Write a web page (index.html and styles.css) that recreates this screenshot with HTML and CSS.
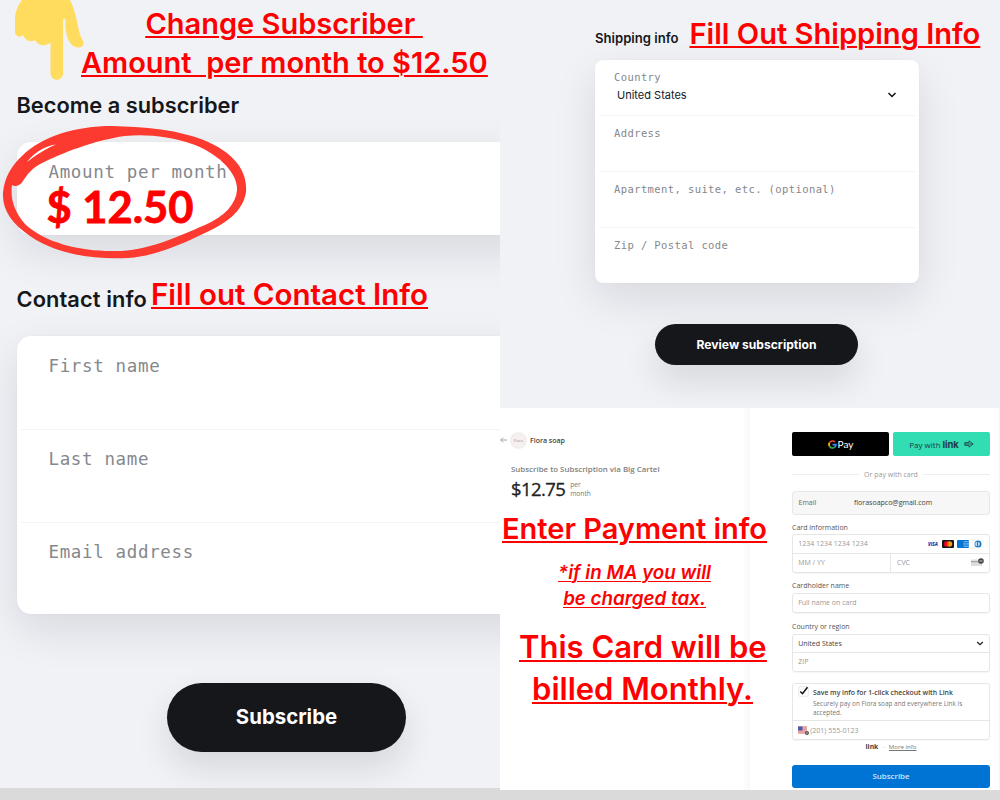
FILE: index.html
```html
<!DOCTYPE html>
<html lang="en">
<head>
    <meta charset="UTF-8">
    <meta name="viewport" content="width=device-width, initial-scale=1.0">
    <title>How to subscribe</title>
    <link rel="stylesheet" href="styles.css">
</head>
<body>
    <div class="board">
        <!-- Step 1: amount and contact details -->
        <section class="panel contact-panel">
            <h2 class="title amount-title"><span>Become a subscriber</span></h2>
            <div class="card amount-card">
                <div class="field">
                    <label>Amount per month</label>
                    <div class="amount">$ 12.50</div>
                </div>
            </div>
            <h2 class="title contact-title"><span>Contact info</span></h2>
            <div class="card contact-card">
                <div class="field"><label>First name</label></div>
                <div class="field"><label>Last name</label></div>
                <div class="field"><label>Email address</label></div>
            </div>
            <button class="pill">Subscribe</button>

            <svg class="hand" width="90" height="84" viewBox="0 0 90 84">
                <path fill="#ffdb5e" d="M22 0 C17 7 15 13 15 20 V31 C15 37 20 38 23 35 C25 40 30 43 35 40 C38 46 46 47 50.500 42.500 V73 C50.500 82 63 82 63 73 V20 C63 18.500 65.500 18.500 65.500 20 C65 31 67 39 71 44 C75 49 84 49 83.500 42 C79 34 78 26 76 17 C74 9 72 4 70 0 Z"/>
            </svg>
            <svg class="ring" width="252" height="140" viewBox="0 0 252 140">
                <path fill="#fc3a2f" fill-rule="evenodd" d="M3 73 C4 58 12 45 22 36 C42 16 76 6 112 6 C120 6 128 7 135 7 C170 9 205 16 227 33 C242 45 247 58 246 72 C243 92 225 104 205 113 C180 125 155 136 128 138 C95 140 55 134 30 116 C12 104 2 90 3 73 Z
                M12 65 C10 80 15 92 25 104 C45 123 80 131 112 131 C145 132 175 118 205 105 C225 96 236 84 237 70 C238 55 222 36 195 25 C170 16 145 14 125 16 C95 20 62 33 40 44 C30 50 27 55 23 61 C20 66 15 67 12 65 Z"/>
                <path fill="#fff" d="M27 42 C33 34 44 26 56 24.500 C47 28 36 35 27 42 Z"/>
            </svg>
            <div class="note note-amount"><span class="line-a">Change Subscriber&nbsp;</span><span class="line-b">Amount&nbsp; per month to $12.50</span></div>
            <div class="note note-contact">Fill out Contact Info</div>
        </section>

        <div class="right">
            <!-- Step 2: shipping -->
            <section class="panel shipping-panel">
                <h2 class="title shipping-title">Shipping info</h2>
                <div class="card shipping-card">
                    <div class="field">
                        <label>Country</label>
                        <div class="select">
                            <span>United States</span>
                            <svg width="10" height="6" viewBox="0 0 10 6"><path d="M1.500 1 L5 4.500 L8.500 1" fill="none" stroke="#111" stroke-width="1.500"/></svg>
                        </div>
                    </div>
                    <div class="field"><label>Address</label></div>
                    <div class="field"><label>Apartment, suite, etc. (optional)</label></div>
                    <div class="field"><label>Zip / Postal code</label></div>
                </div>
                <button class="pill">Review subscription</button>
                <div class="note note-shipping">Fill Out Shipping Info</div>
            </section>

            <!-- Step 3: payment -->
            <section class="payment-panel">
                <div class="summary">
                    <div class="merchant">
                        <svg width="8" height="8" viewBox="0 0 8 8"><path d="M7 4 H.7 M3.200 1.500 L.7 4 L3.200 6.500" fill="none" stroke="#999" stroke-width=".9"/></svg>
                        <span class="avatar">Fiora</span>
                        <span class="merchant-name">Fiora soap</span>
                    </div>
                    <div class="plan">Subscribe to Subscription via Big Cartel</div>
                    <div class="price">
                        <span class="price-value">$12.75</span>
                        <span class="price-period">per<br>month</span>
                    </div>
                </div>

                <form class="checkout">
                    <div class="wallets">
                        <div class="wallet gpay">
                            <svg width="9" height="9" viewBox="0 0 18 18">
                                <path fill="none" stroke="#ea4335" stroke-width="3.400" d="M3 5.500 A7 7 0 0 1 14 4"/>
                                <path fill="none" stroke="#fbbc04" stroke-width="3.400" d="M3 12.500 A7 7 0 0 1 3 5.500"/>
                                <path fill="none" stroke="#34a853" stroke-width="3.400" d="M13.500 14.400 A7 7 0 0 1 3 12.500"/>
                                <path fill="none" stroke="#4285f4" stroke-width="3.400" d="M9 9.200 H16 A7 7 0 0 1 13.500 14.400"/>
                            </svg>
                            <span>Pay</span>
                        </div>
                        <div class="wallet link-pay">
                            <span>Pay with</span><b>link</b>
                            <svg width="10" height="8" viewBox="0 0 10 8"><path d="M.8 2.600 H5 V.9 L9.200 4 L5 7.100 V5.400 H.8 Z M1 4 H8" fill="none" stroke="#1d3944" stroke-width=".8"/></svg>
                        </div>
                    </div>
                    <div class="divider"><span>Or pay with card</span></div>

                    <div class="email"><span class="email-label">Email</span><span>fiorasoapco@gmail.com</span></div>

                    <label class="form-label">Card information</label>
                    <div class="box card-box">
                        <div class="cell card-number">
                            <span>1234 1234 1234 1234</span>
                            <div class="brands">
                                <span class="brand visa">VISA</span>
                                <svg class="brand" width="12" height="8" viewBox="0 0 12 8"><rect width="12" height="8" rx="1" fill="#171717"/><circle cx="4.500" cy="4" r="2.700" fill="#eb001b"/><circle cx="7.500" cy="4" r="2.700" fill="#f79e1b"/><ellipse cx="6" cy="4" rx="1" ry="2.200" fill="#ff5f00"/></svg>
                                <svg class="brand" width="12" height="8" viewBox="0 0 12 8"><rect width="12" height="8" rx="1" fill="#0074d4"/><path d="M6.500 1.500 H12 M6.500 3.300 H12 M6.500 4.900 H12 M6.500 6.500 H12" stroke="#a9d0f2" stroke-width=".8"/><path d="M7.500 1 L11 7 M11 1 L7.500 7" stroke="#2585d8" stroke-width=".7"/></svg>
                                <svg class="brand" width="12" height="8" viewBox="0 0 12 8"><rect x=".2" y=".2" width="11.600" height="7.600" rx="1" fill="#fff" stroke="#eee" stroke-width=".4"/><circle cx="6" cy="4" r="3.500" fill="#1a79c0"/><circle cx="5.500" cy="4" r="2.300" fill="#d8eaf7"/><path d="M5.500 2 V6" stroke="#1a79c0" stroke-width="1.200"/></svg>
                            </div>
                        </div>
                        <div class="split">
                            <div class="cell">MM / YY</div>
                            <div class="cell cvc">
                                <span>CVC</span>
                                <svg width="13" height="9" viewBox="0 0 13 9"><rect y="1.500" width="11" height="6.500" rx=".8" fill="#ddd"/><rect y="3" width="11" height="1.300" fill="#aaa"/><circle cx="10" cy="3" r="2.800" fill="#444"/><path d="M8.300 3 H11.700" stroke="#bbb" stroke-width="1.100"/></svg>
                            </div>
                        </div>
                    </div>

                    <label class="form-label">Cardholder name</label>
                    <div class="box name-box"><div class="cell">Full name on card</div></div>

                    <label class="form-label">Country or region</label>
                    <div class="box region-box">
                        <div class="cell region">
                            <span>United States</span>
                            <svg width="8" height="5" viewBox="0 0 8 5"><path d="M1.200 1 L4 3.700 L6.800 1" fill="none" stroke="#222" stroke-width="1.300"/></svg>
                        </div>
                        <div class="cell">ZIP</div>
                    </div>

                    <div class="box save-box">
                        <div class="save">
                            <svg width="12" height="11" viewBox="0 0 12 11"><rect x=".5" y=".5" width="10" height="10" rx="1.500" fill="#fafafa" stroke="#ececec"/><path d="M2.300 5.500 L4.500 7.700 L9.500 1.300" fill="none" stroke="#111" stroke-width="1.500"/></svg>
                            <div class="save-text">
                                <strong>Save my info for 1-click checkout with Link</strong>
                                <p>Securely pay on Fiora soap and everywhere Link is accepted.</p>
                            </div>
                        </div>
                        <div class="cell phone">
                            <svg width="12" height="9" viewBox="0 0 12 9"><rect y=".5" width="9" height="7" fill="#f4d3d3"/><path d="M0 1 H9 M0 3 H9 M0 5 H9 M0 7 H9" stroke="#d66" stroke-width=".9"/><rect y=".5" width="4.500" height="4" fill="#4c5ba8"/><circle cx="9" cy="7" r="2" fill="#555"/><circle cx="9" cy="7" r=".7" fill="#ccc"/></svg>
                            <span>(201) 555-0123</span>
                        </div>
                    </div>
                    <div class="link-info"><b>link</b><i>·</i><u>More info</u></div>
                    <div class="submit">Subscribe</div>
                </form>

                <div class="note note-payment">Enter Payment info</div>
                <div class="note note-tax"><span class="line-a">*if in MA you will</span><span class="line-b">be charged tax.</span></div>
                <div class="note note-billed"><span class="line-a">This Card will be</span><span class="line-b">billed Monthly.</span></div>
            </section>
        </div>
    </div>
</body>
</html>
```
FILE: styles.css
```css
* {
    box-sizing: border-box;
}

body {
    margin: 0;
    background-color: #dadada;
    font-family: Inter, "Liberation Sans", sans-serif;
}

.board {
    display: grid;
    grid-template-columns: 500px 500px;
    width: 1000px;
    height: 800px;
    overflow: hidden;
    align-items: start;
}

.panel {
    position: relative;
    overflow: hidden;
    background-color: #f1f2f6;
    color: #15171b;
}

.contact-panel {
    height: 788px;
    padding: 90px 0 0 16.5px;
}

.title {
    margin: 0;
    font-size: 21.8px;
    line-height: 30px;
    font-weight: 600;
    white-space: nowrap;
}

.contact-title span {
    letter-spacing: 0.1px;
}

.card {
    background-color: white;
    box-shadow: 0 16px 44px rgba(20, 22, 35, 0.11), 0 0 2px rgba(20, 22, 35, 0.05);
}

.contact-panel .card {
    width: 640px;
    border-radius: 14px;
}

.field label {
    display: block;
    color: #85888c;
    font-family: "DejaVu Sans Mono", monospace;
    white-space: pre;
}

.contact-panel .field {
    height: 92.8px;
    padding: 18px 32px 0;
}

.contact-panel label {
    font-size: 17.5px;
    line-height: 24px;
    letter-spacing: 0.65px;
}

.amount-card {
    margin-top: 22px;
}

.amount-card .field {
    height: 92.5px;
}

.amount {
    margin: 2px 0 0 -2px;
    color: red;
    font-family: Lato, sans-serif;
    font-size: 43.5px;
    line-height: 40px;
    font-weight: 700;
    -webkit-text-stroke: 0.8px red;
}

.contact-title {
    margin-top: 51.5px;
}

.amount-card + .contact-title {
    margin-top: 49.5px;
}

.contact-card {
    margin-top: 22px;
}

.contact-card .field + .field,
.shipping-card .field + .field {
    background: linear-gradient(#f3f3f4, #f3f3f4) 4px 0 / calc(100% - 8px) 1px no-repeat;
}

.pill {
    display: block;
    border: 0;
    padding: 0;
    background-color: #15171b;
    color: white;
    font-family: inherit;
    font-weight: 700;
    box-shadow: 0 16px 34px rgba(20, 22, 35, 0.12);
}

.contact-panel .pill {
    width: 239px;
    height: 69px;
    margin: 69px 0 0 150.5px;
    padding-bottom: 2px;
    border-radius: 35px;
    font-size: 20.4px;
}

/* Drawn over the form */
.hand {
    position: absolute;
    left: 0;
    top: 0;
}

.ring {
    position: absolute;
    left: 0;
    top: 120px;
}

.note {
    position: absolute;
    color: red;
    font-size: 29px;
    font-weight: 600;
    line-height: 40px;
    text-align: center;
    text-decoration: underline;
    text-decoration-thickness: 2px;
    text-underline-offset: 2px;
    white-space: nowrap;
}

.note span {
    display: block;
    text-decoration: underline;
    text-decoration-thickness: inherit;
    text-underline-offset: inherit;
}

.note-amount {
    left: 81px;
    top: 4px;
    width: 406px;
    line-height: 39.4px;
}

.note-contact {
    left: 151px;
    top: 274px;
    font-size: 29.5px;
}

/* Shipping */
.shipping-panel {
    height: 408px;
    padding: 28px 0 0 95px;
}

.shipping-title {
    font-size: 13.1px;
    line-height: 20px;
}

.shipping-card {
    width: 324px;
    margin-top: 11.6px;
    border-radius: 8px;
}

.shipping-card .field {
    height: 55.8px;
    padding: 8.6px 19px 0;
}

.shipping-card label {
    font-size: 10.5px;
    line-height: 18px;
    letter-spacing: 0.4px;
}

.select {
    display: flex;
    align-items: center;
    justify-content: space-between;
    padding: 1px 3px 0 3px;
    font-size: 11px;
    line-height: 16px;
}

.shipping-panel .pill {
    width: 203px;
    height: 41px;
    margin: 41.2px 0 0 60px;
    border-radius: 21px;
    font-size: 12.1px;
}

.note-shipping {
    left: 189.5px;
    top: 14px;
    font-size: 29.1px;
}

/* Payment */
.payment-panel {
    position: relative;
    display: grid;
    grid-template-columns: 250px 250px;
    height: 382px;
    background-color: white;
    color: #3c3f44;
    font-family: "Open Sans", "Noto Sans", sans-serif;
    font-size: 7px;
}

.summary {
    padding: 24px 0 0;
    background: linear-gradient(to left, #f8f8f8, #fff 8px);
}

.merchant {
    display: flex;
    align-items: center;
    height: 16px;
}

.avatar {
    width: 15px;
    height: 15px;
    margin: 0 4px 0 3px;
    border-radius: 50%;
    background-color: #f6f1ee;
    box-shadow: 0 0 2px #ccc;
    color: #988;
    font-size: 4px;
    line-height: 15px;
    text-align: center;
}

.merchant-name {
    font-weight: 600;
}

.plan {
    margin: 15px 0 0 11px;
    color: #808080;
    font-size: 7.9px;
    font-weight: 600;
    line-height: 13px;
}

.price {
    display: flex;
    align-items: center;
    margin: 2px 0 0 11px;
}

.price-value {
    color: #222;
    font-size: 18.5px;
    font-weight: 500;
    line-height: 22px;
    letter-spacing: -0.6px;
    -webkit-text-stroke: 0.3px #222;
}

.price-period {
    margin-left: 5px;
    color: #777;
    font-size: 6.7px;
    line-height: 9px;
}

.checkout {
    display: flex;
    flex-direction: column;
    padding: 24px 9px 0 42px;
    border-right: 1px solid #f3f3f3;
}

.wallets {
    display: grid;
    grid-template-columns: 1fr 1fr;
    gap: 4px;
}

.wallet {
    display: flex;
    align-items: center;
    justify-content: center;
    height: 24px;
    border-radius: 2px;
}

.gpay {
    gap: 1px;
    background-color: black;
    color: white;
    font-family: Lato, sans-serif;
    font-size: 10px;
}

.link-pay {
    gap: 2px;
    background-color: #33ddb3;
    color: #1d3944;
    font-size: 8px;
}

.link-pay b {
    font-family: Inter, sans-serif;
    font-size: 9.5px;
    letter-spacing: -0.1px;
}

.link-pay svg {
    margin-left: 3px;
}

.divider {
    display: flex;
    align-items: center;
    gap: 5px;
    height: 10px;
    margin-top: 13px;
    color: #999;
}

.divider::before,
.divider::after {
    content: "";
    flex: 1;
    height: 1px;
    background-color: #eee;
}

.email {
    display: flex;
    align-items: center;
    height: 24px;
    margin-top: 11.5px;
    padding-left: 5.5px;
    border: 1px solid #e8e8e8;
    border-radius: 3px;
    background-color: #f7f7f7;
}

.email-label {
    width: 55.5px;
    color: #666;
}

.form-label {
    margin-top: 8.3px;
    color: #555;
    line-height: 10px;
}

.box {
    border: 1px solid #e6e6e6;
    border-radius: 3px;
    box-shadow: 0 1px 1px rgba(0, 0, 0, 0.04);
    color: #999;
}

.card-box {
    height: 39px;
    margin-top: 1px;
}

.cell {
    display: flex;
    align-items: center;
    justify-content: space-between;
    height: 18px;
    padding: 0 5.2px;
}

.split {
    display: grid;
    grid-template-columns: 97px 1fr;
    border-top: 1px solid #e6e6e6;
}

.cvc {
    padding-left: 6px;
    border-left: 1px solid #e6e6e6;
}

.brands {
    display: flex;
    gap: 3px;
}

.visa {
    width: 12px;
    height: 8px;
    color: #2438a8;
    font-size: 4.5px;
    font-style: italic;
    font-weight: 800;
    line-height: 8px;
    text-align: center;
}

.name-box {
    margin-top: 1.5px;
}

.name-box .cell {
    height: 18px;
}

.name-box + .form-label {
    margin-top: 9.3px;
}

.region-box {
    margin-top: 2px;
}

.region {
    height: 18px;
    border-bottom: 1px solid #e6e6e6;
    color: #444;
}

.save-box {
    margin-top: 11.5px;
}

.save {
    display: flex;
    height: 37px;
    padding: 2px 0 0 5px;
    border-bottom: 1px solid #e6e6e6;
}

.save-text {
    margin-left: 3px;
    color: #444;
    line-height: 9px;
}

.save-text strong {
    display: block;
    margin-top: 2px;
    font-size: 6.85px;
    font-weight: 600;
}

.save-text p {
    width: 160px;
    margin: 2px 0 0;
    color: #777;
    font-size: 6.4px;
}

.phone {
    justify-content: flex-start;
}

.link-info {
    display: flex;
    justify-content: center;
    gap: 4.5px;
    margin-top: 2px;
    color: #777;
    font-size: 6.1px;
    line-height: 10px;
}

.link-info b {
    color: #444;
    font-size: 6.8px;
}

.submit {
    height: 23px;
    margin-top: 13px;
    border-radius: 3px;
    background-color: #0074d4;
    color: #cfe6fa;
    font-size: 7.9px;
    font-weight: 600;
    line-height: 22px;
    text-align: center;
}

.payment-panel .note {
    font-family: Inter, "Liberation Sans", sans-serif;
}

.note-payment {
    left: 2px;
    top: 101px;
    text-underline-offset: 2px;
}

.note-tax {
    left: 58px;
    top: 152px;
    width: 153px;
    font-size: 18.8px;
    font-style: italic;
    line-height: 25.5px;
    text-decoration-thickness: 1px;
}

.note-billed {
    left: 19px;
    top: 218px;
    width: 247px;
    font-size: 31px;
    line-height: 41.5px;
}

.note .line-a,
.note .line-b {
    width: max-content;
    margin: 0 auto;
}
```
